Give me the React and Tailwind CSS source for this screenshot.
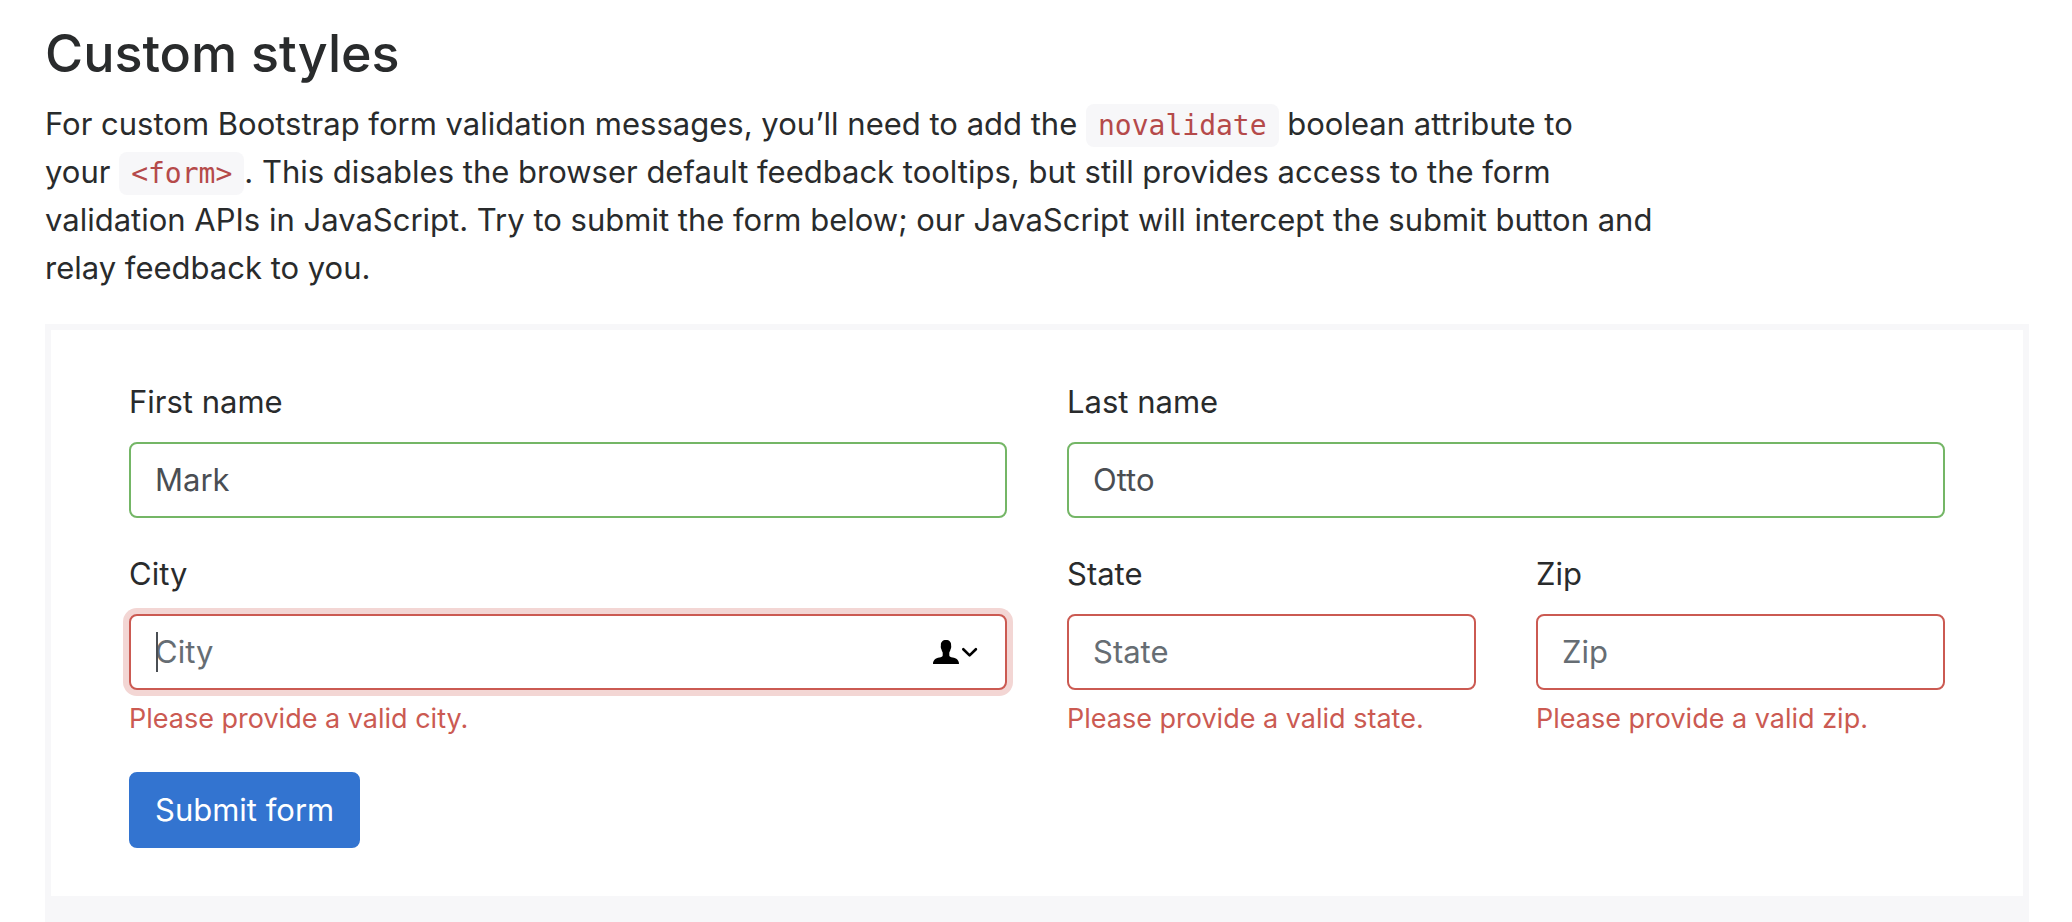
const inputBase =
  "block w-full rounded-lg border-2 bg-white px-6 py-3 text-[31px] leading-[48px] text-[#4a4e53] outline-none placeholder:text-[#666d73] placeholder:opacity-100";

function Field({ id, label, valid, feedback, className = "", inputClass = "", children, ...props }) {
  return (
    <div className={`mb-8 ${className}`}>
      <label htmlFor={id} className="mb-4 block text-[31px] leading-[48px]">
        {label}
      </label>
      <div className="relative">
        <input
          id={id}
          type="text"
          aria-invalid={!valid}
          aria-describedby={feedback ? `${id}-feedback` : undefined}
          className={`${inputBase} ${valid ? "border-[#74b666]" : "border-[#cb5a52]"} ${inputClass}`}
          {...props}
        />
        {children}
      </div>
      {feedback && (
        <p id={`${id}-feedback`} className="mt-2 text-[27px] leading-[42px] text-[#cb5a52]">
          {feedback}
        </p>
      )}
    </div>
  );
}

function Code({ children }) {
  return (
    <code className="rounded-lg bg-[#f7f7f9] px-3 py-[5px] font-['DejaVu_Sans_Mono',monospace] text-[28px] leading-none text-[#b54a4a]">
      {children}
    </code>
  );
}

function AutofillButton() {
  return (
    <button
      type="button"
      aria-label="Autofill contact"
      className="absolute inset-y-0 right-[29px] flex items-center text-black"
    >
      <svg width="46" height="26" viewBox="0 0 46 26" fill="none">
        <path
          d="M14 1C10.600 1 8.700 3 8.900 6.200C8.600 8 8.800 9.200 9.500 10.400C9.800 11.900 10.400 12.800 10.700 13.600V16.400C10.600 17.600 9.400 18.100 7.400 18.500C3.500 19.300 1 21 1 25H27C27 21 24.500 19.300 20.600 18.500C18.600 18.100 17.400 17.600 17.300 16.400V13.600C17.600 12.800 18.200 11.900 18.500 10.400C19.200 9.200 19.400 8 19.100 6.200C19.300 3 17.400 1 14 1Z"
          fill="currentColor"
        />
        <path d="M31.300 10.200L37.600 16.400L43.900 10.200" stroke="currentColor" strokeWidth="2.600" strokeLinecap="round" strokeLinejoin="round" />
      </svg>
    </button>
  );
}

export default function App() {
  return (
    <main className="min-h-screen bg-white pt-5 pr-[43px] pl-[45px] font-['Inter',sans-serif] text-[#292b2c]">
      <h3 className="mb-3 text-[52px] leading-[68px] font-medium">Custom styles</h3>
      <p className="mb-8 max-w-[84%] text-[31px] leading-[48px]">
        For custom Bootstrap form validation messages, you’ll need to add the <Code>novalidate</Code> boolean
        attribute to
        <br />
        your <Code>&lt;form&gt;</Code>. This disables the browser default feedback tooltips, but still
        provides access to the form
        <br />
        validation APIs in JavaScript. Try to submit the form below; our JavaScript will
        intercept the submit button and
        <br />
        relay feedback to you.
      </p>
      <section className="border-6 border-b-0 border-[#f7f7f9]">
        <form noValidate className="px-[78px] py-12" onSubmit={(e) => e.preventDefault()}>
          <div className="grid grid-cols-4 gap-x-[60px]">
            <Field id="first" label="First name" valid defaultValue="Mark" className="col-span-2" />
            <Field id="last" label="Last name" valid defaultValue="Otto" className="col-span-2" />
            <Field
              id="city"
              label="City"
              placeholder="City"
              feedback="Please provide a valid city."
              className="col-span-2"
              inputClass="ring-6 ring-[#f3d6d4]"
            >
              <span className="absolute top-[18px] left-[27px] h-10 w-[2px] bg-[#4a4e53]" />
              <AutofillButton />
            </Field>
            <Field id="state" label="State" placeholder="State" feedback="Please provide a valid state." />
            <Field id="zip" label="Zip" placeholder="Zip" feedback="Please provide a valid zip." />
          </div>
          <button
            type="submit"
            className="rounded-lg border-2 border-[#3374d0] bg-[#3374d0] px-6 py-3 text-[31px] leading-[48px] text-white"
          >
            Submit form
          </button>
        </form>
        <div className="h-[26px] bg-[#f7f7f9]" />
      </section>
    </main>
  );
}
